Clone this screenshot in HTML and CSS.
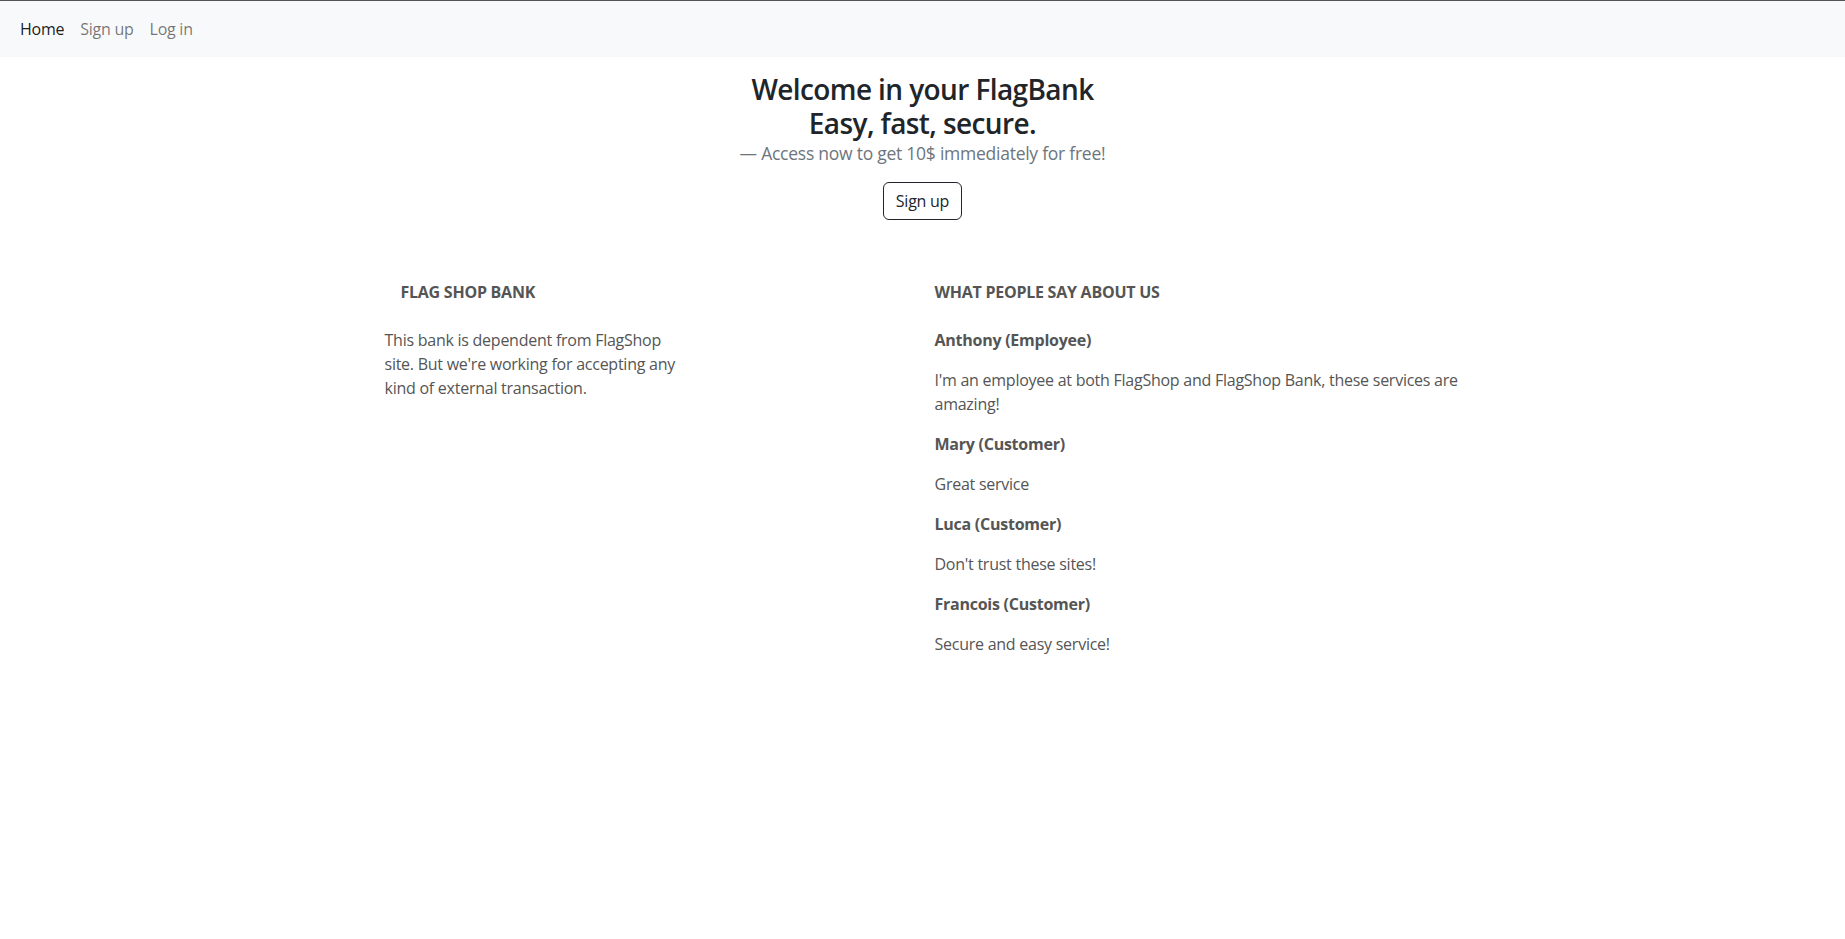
FILE: index.html
```html
<!DOCTYPE html>
<html lang="en">
<head>
<meta charset="utf-8">
<title>FlagBank</title>
<link rel="stylesheet" href="styles.css">
</head>
<body>
<nav class="navbar">
  <a class="nav-link active" href="#">Home</a>
  <a class="nav-link" href="#">Sign up</a>
  <a class="nav-link" href="#">Log in</a>
</nav>
<main>
  <figure class="hero">
    <blockquote class="hero-quote">
      <h3 class="hero-title">Welcome in your FlagBank<br>Easy, fast, secure.</h3>
    </blockquote>
    <figcaption class="hero-caption">— Access now to get 10$ immediately for free!</figcaption>
    <a class="btn" href="#">Sign up</a>
  </figure>
  <section class="info">
    <div class="col-left">
      <h6 class="col-title indent">FLAG SHOP BANK</h6>
      <p>This bank is dependent from FlagShop site. But we're working for accepting any kind of external transaction.</p>
    </div>
    <div class="col-right">
      <h6 class="col-title">WHAT PEOPLE SAY ABOUT US</h6>
      <p class="name">Anthony (Employee)</p>
      <p>I'm an employee at both FlagShop and FlagShop Bank, these services are amazing!</p>
      <p class="name">Mary (Customer)</p>
      <p>Great service</p>
      <p class="name">Luca (Customer)</p>
      <p>Don't trust these sites!</p>
      <p class="name">Francois (Customer)</p>
      <p>Secure and easy service!</p>
    </div>
  </section>
</main>
</body>
</html>
```
FILE: styles.css
```css
* { box-sizing: border-box; }
html, body { margin: 0; padding: 0; }
body {
  font-family: "Open Sans", "DejaVu Sans", sans-serif;
  font-size: 16px;
  line-height: 1.5;
  letter-spacing: -0.25px;
  color: #555;
  background: #fff;
  border-top: 1px solid #555;
}
.navbar {
  display: flex;
  align-items: center;
  height: 56px;
  padding: 0 12px;
  background: #f8f9fa;
}
.nav-link {
  padding: 8px;
  color: rgba(0, 0, 0, 0.55);
  text-decoration: none;
  line-height: 24px;
}
.nav-link.active { color: rgba(0, 0, 0, 0.9); }
.hero {
  margin: 16px 0 0;
  display: flex;
  flex-direction: column;
  align-items: center;
  text-align: center;
}
.hero-quote { margin: 0; }
.hero-title {
  margin: 0;
  font-size: 28px;
  line-height: 1.2;
  font-weight: 600;
  letter-spacing: -0.6px;
  color: #212529;
}
.hero-caption {
  font-size: 17.5px;
  line-height: 1.5;
  color: #6c757d;
  margin: 0 0 16px;
}
.btn {
  display: inline-block;
  padding: 6px 12px;
  font-size: 16px;
  line-height: 24px;
  color: #212529;
  text-decoration: none;
  border: 1px solid #212529;
  border-radius: 6px;
}
.info {
  width: 1320px;
  margin: 62px auto 0;
  display: grid;
  grid-template-columns: 110px 330px 220px 550px 1fr;
}
.col-left { grid-column: 2; padding: 0 12px; }
.col-right { grid-column: 4; padding: 0 12px; }
.col-title {
  margin: 0 0 26px;
  font-size: 16px;
  line-height: 20px;
  font-weight: 700;
  color: #555;
}
.col-title.indent { padding-left: 16px; }
p { margin: 0 0 16px; }
.name { font-weight: 700; }
```
